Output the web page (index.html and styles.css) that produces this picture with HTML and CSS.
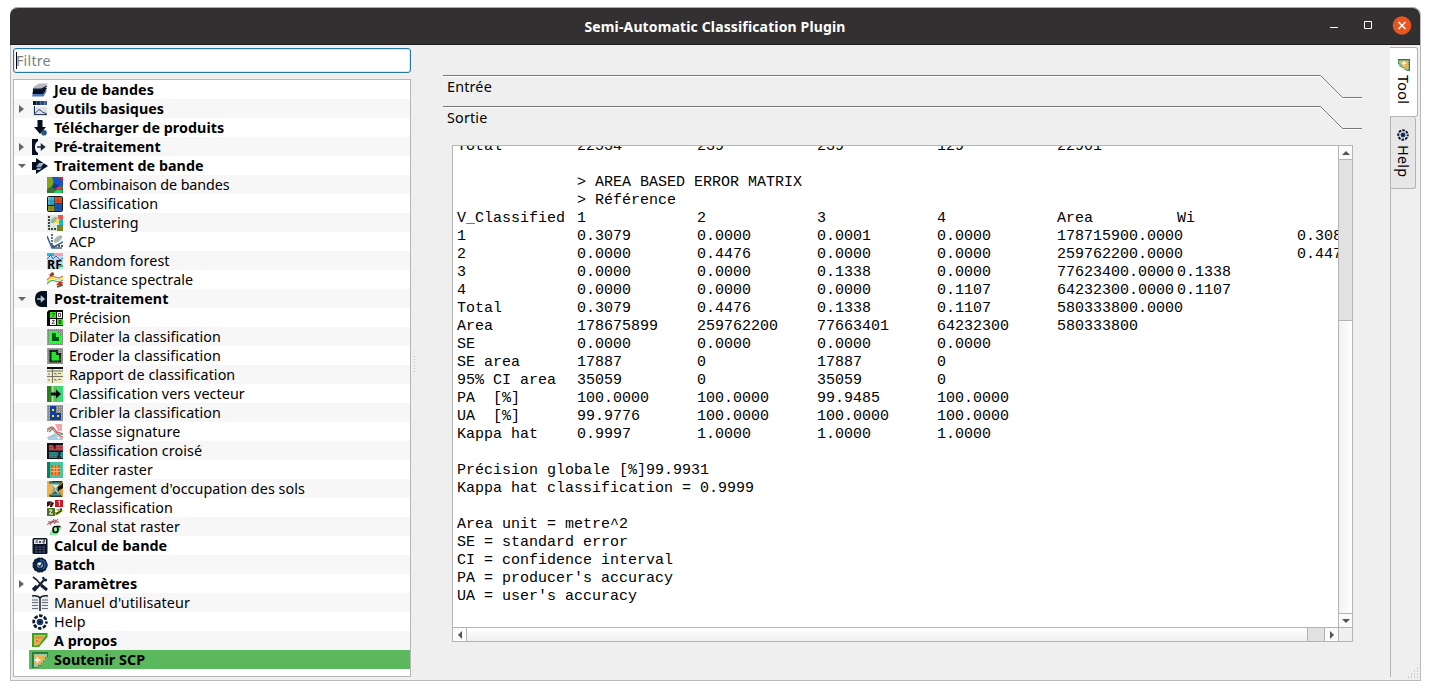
FILE: index.html
```
<!DOCTYPE html>
<html lang="fr">
<head>
<meta charset="utf-8">
<title>Semi-Automatic Classification Plugin</title>
<link rel="stylesheet" href="styles.css">
</head>
<body>
<svg class="defs" width="0" height="0">
  <defs>
    <pattern id="mesh" width="2" height="2" patternUnits="userSpaceOnUse"><rect width="2" height="2" fill="#8c8c8c"/><rect width="1" height="1" fill="#b4b4b4"/></pattern>
    <pattern id="dots" width="2" height="2" patternUnits="userSpaceOnUse"><rect width="1" height="1" fill="#fff" opacity=".45"/></pattern>
    <linearGradient id="blue" x2="1"><stop stop-color="#04101f"/><stop offset="1" stop-color="#3c62a4"/></linearGradient>
    <linearGradient id="sky" x2="1" y2="1"><stop stop-color="#6dd3e8"/><stop offset="1" stop-color="#1f8cba"/></linearGradient>
    <symbol id="lifebuoy" viewBox="0 0 16 16"><circle cx="8" cy="8" r="6.3" fill="none" stroke="#0c1830" stroke-width="2.700" stroke-dasharray="3.5 1.448" stroke-dashoffset="1.75"/><circle cx="8" cy="8" r="3.300" fill="#1c3d73"/><circle cx="8" cy="8" r="1.500" fill="#0c1830"/></symbol>
    <symbol id="plugin" viewBox="0 0 16 16"><path d="M0 0H16V5H14V8H12V11H10V14H7V16H0Z" fill="#2f7a35"/><path d="M2 2H15V5H13V8H11V11H9V13H6V15H2Z" fill="#e9b455"/><path d="M2 2.500H15M2.500 2V15" stroke="#7fd6d0" stroke-width="1.200" stroke-dasharray="2 1"/><path d="M15 5H13.500V8H11.500V11H9.500V13H6.500V15H2" fill="none" stroke="#4cc0cd" stroke-width="1.200" stroke-dasharray="2 1"/><path d="M5.500 5V11M2.500 8H8.500" stroke="#fff" stroke-width="1.400"/></symbol>
  </defs>
</svg>
<div class="window">
  <header class="titlebar">
    <h1 class="title">Semi-Automatic Classification Plugin</h1>
    <div class="controls">
      <svg width="88" height="20" viewBox="0 0 88 20"><path d="M4 11.5H12" stroke="#fff"/><path d="M38.5 5.5H45.5V12.5H38.5Z" fill="none" stroke="#fff"/><circle cx="76" cy="9.500" r="9.3" fill="#e95420"/><path d="M72.5 6L79.5 13M79.5 6L72.5 13" stroke="#fff" stroke-width="1.5"/></svg>
    </div>
  </header>
  <div class="body">
    <aside class="sidebar">
      <div class="filter"><i class="caret"></i><span>Filtre</span></div>
      <ul class="tree">
        <li class="top"><i class="arrow"></i><svg class="icon" viewBox="0 0 16 16"><path d="M1 11L5 8.5H15L11.5 14.5H0Z" fill="#5279bd"/><path d="M1 8L5 6H15L11 12H0.5Z" fill="#04101f"/><path d="M2 4.5L7 1.5H16L11.5 7H1Z" fill="#b6b9be"/><path d="M1 6.500H9L15 3.5V4.500L11 8.3H1Z" fill="#101d31"/></svg><span>Jeu de bandes</span></li>
        <li class="top"><i class="arrow closed"></i><svg class="icon" viewBox="0 0 16 16"><rect x="1" width="14" height="4" fill="url(#blue)"/><path d="M4.5 0V4M8.5 0V4M12.5 0V4" stroke="#8ba1c7" stroke-width=".5"/><rect x="1" y="6" width="14" height="9" fill="#dce1e9"/><path d="M2.5 5V13.5H15M3 12C5 12 6 7.500 8 9S11 12 14.500 12.500" fill="none" stroke="#263a5c"/></svg><span>Outils basiques</span></li>
        <li class="top"><i class="arrow"></i><svg class="icon" viewBox="0 0 16 16"><path d="M5.500 0H10.500V7H14L8 14L2 7H5.500Z" fill="#04101f"/><circle cx="12" cy="12.700" r="2.800" fill="#2b5480"/></svg><span>Télécharger de produits</span></li>
        <li class="top"><i class="arrow closed"></i><svg class="icon" viewBox="0 0 16 16"><path d="M0 0H6V2Q3 3.500 3 8T6 14V16H0Z" fill="#04101f"/><path d="M5 8H11M9.500 5.500L12.500 8L9.500 10.500Z" stroke="#1c2a40" stroke-width="1.500" fill="#1c2a40"/></svg><span>Pré-traitement</span></li>
        <li class="top"><i class="arrow open"></i><svg class="icon" viewBox="0 0 16 16"><path d="M0 4H4V0L16 8L4 16V12H0Z" fill="#04101f"/><path d="M4 9L7 5H12L9 9ZM4 12L6 9H10L8 12Z" fill="#9fb6cf"/><path d="M5 9.500H10" stroke="#274773" stroke-width="1.500"/></svg><span>Traitement de bande</span></li>
        <li class="child tight"><svg class="icon" viewBox="0 0 16 16"><rect width="16" height="16" fill="#35752e"/><path d="M0 0H8L5 9L0 12Z" fill="#85a515"/><path d="M5 0H13L16 3V9L10 10L7 6Z" fill="#1556cf"/><path d="M11 0H16V4Z" fill="#d82c22"/><path d="M7 6L12 8L9 13L5 10Z" fill="#183b8d"/><path d="M8 12L12 9.500L16 10L13 13Z" fill="#f13448"/><path d="M7 15L10 13L16 13.500L14 16H8Z" fill="#20d474"/></svg><span>Combinaison de bandes</span></li>
        <li class="child"><svg class="icon" viewBox="0 0 16 16"><rect width="16" height="16" rx="2" fill="#151515"/><path d="M1 1H7.500V9H1Z" fill="url(#sky)"/><path d="M8 1H15V7.500H8Z" fill="#e84b1c"/><path d="M1 10H7.500V15H1Z" fill="#8f9b25"/><path d="M8 8H15V15H8Z" fill="#1756be"/><path d="M4 1V15M11 1V15M1 5H15M1 12H15" stroke="#222" stroke-width=".2"/></svg><span>Classification</span></li>
        <li class="child"><svg class="icon" viewBox="0 0 16 16"><rect width="16" height="16" fill="#dce8df"/><path d="M2 1V14H11" stroke="#111" stroke-width="1.500" stroke-dasharray="2 1" fill="none"/><ellipse cx="7" cy="5" rx="4" ry="2.400" fill="#9db4aa" transform="rotate(-40 7 5)"/><path d="M11 0H16V6H11Z" fill="#ed5549"/><path d="M9 4H13V8H9Z" fill="#f4e225"/><path d="M12 5H16V10H12Z" fill="#10b7db"/><path d="M10 10H16V16H10Z" fill="#748722"/></svg><span>Clustering</span></li>
        <li class="child"><svg class="icon" viewBox="0 0 16 16"><path d="M5 0V12H16" stroke="#222" stroke-width="1.300" stroke-dasharray="2 1" fill="none"/><ellipse cx="11" cy="5" rx="5" ry="2.400" fill="#a4bbb4" transform="rotate(-38 11 5)"/><path d="M0 2L5 14L16 8M5 14H15" fill="none" stroke="#356096" stroke-width="1.500"/></svg><span>ACP</span></li>
        <li class="child"><svg class="icon" viewBox="0 0 16 16"><rect width="16" height="16" fill="#bbd8f4"/><path d="M0 0H7V3H0Z" fill="#25bad4"/><path d="M7 0H16V3H7Z" fill="#f2a2ae"/><path d="M0 6L4 2L6 6L9 3L13 7L16 5" stroke="#4a6caf" fill="none"/><text x="0" y="15.500" class="rf" textLength="15" lengthAdjust="spacingAndGlyphs">RF</text><path d="M12 12H16V14H12Z" fill="#45b94b"/></svg><span>Random forest</span></li>
        <li class="child"><svg class="icon" viewBox="0 0 16 16"><path d="M2 3L5 0L7 1L5 4Z" fill="#d92b25"/><path d="M3 4.500L7 2" stroke="#226b37" stroke-width="1.500"/><path d="M0 8Q4 3 8 5T16 4" fill="none" stroke="#de793e" stroke-width="1.300"/><path d="M0 10Q4 5 8 7T16 6" fill="none" stroke="#f0dd37" stroke-width="1.300"/><path d="M0 12Q4 7 8 9T16 8" fill="none" stroke="#48b665" stroke-width="1.300"/><path d="M9 13L12 10H16L14 14Z" fill="#d92b25"/><path d="M10 15L16 13" stroke="#226b37" stroke-width="1.500"/></svg><span>Distance spectrale</span></li>
        <li class="top"><i class="arrow open"></i><svg class="icon" viewBox="0 0 16 16"><path d="M15 0H9Q3 1 3 8T9 16H15Z" fill="#04101f"/><path d="M5 8H11M9.500 5.800L12 8L9.500 10.200Z" stroke="#b4c1da" stroke-width="1.500" fill="#b4c1da"/></svg><span>Post-traitement</span></li>
        <li class="child"><svg class="icon" viewBox="0 0 16 16"><path d="M0 2L2 0H16V16H0Z" fill="#080808"/><path d="M3 2H9V8H3ZM10 9H16V15H10Z" fill="#39e81f"/><path d="M10 2H15V8H10ZM3 9H9V15H3Z" fill="#f4f4f4"/><path d="M4.500 3.500H7.500L5.500 7M11.500 3.500H13.500V6.500H11.500ZM5 10.500H7.500L5 13.500H7.500M12 10.500H14V13.500H12ZM12 12H14" fill="none" stroke="#333" stroke-width=".8"/></svg><span>Précision</span></li>
        <li class="child"><svg class="icon" viewBox="0 0 16 16"><rect width="16" height="16" fill="url(#mesh)"/><path d="M2 2H11V4H13V7H15V14H2Z" fill="#20ff2f"/><path d="M5 4H9V8H12V12H5Z" fill="#07521b"/></svg><span>Dilater la classification</span></li>
        <li class="child"><svg class="icon" viewBox="0 0 16 16"><rect width="16" height="16" fill="url(#mesh)"/><path d="M3 3H10V6H13V13H4Z" fill="#20e82f"/><path d="M3.500 3H10V6H13V13.500H3.500Z" fill="none" stroke="#101810" stroke-width="2.200" stroke-dasharray="2 .3"/></svg><span>Eroder la classification</span></li>
        <li class="child"><svg class="icon" viewBox="0 0 16 16"><rect width="16" height="16" fill="#eceac0"/><path d="M0 0H16V2H0Z" fill="#111"/><path d="M0 4H16M0 9.500H16M5.500 2V16" stroke="#555" stroke-width=".8"/><path d="M2 6V8M2 12V14M7 6.500H9V8M11 6.500H14M7 12.500H9V14M11 12.500H14" fill="none" stroke="#777" stroke-width=".9"/></svg><span>Rapport de classification</span></li>
        <li class="child"><svg class="icon" viewBox="0 0 16 16"><rect width="16" height="16" fill="#5bbc55"/><path d="M0 0H5V16H0Z" fill="#287b1e"/><path d="M5.500 0V16" stroke="#a4e39e" stroke-width="2"/><path d="M10 0H16V16H10Z" fill="#39d875"/><path d="M4 6.500H9V3.500L14 8L9 12.500V9.500H4Z" fill="#050505"/><path d="M0 0H16V16H0Z" fill="url(#dots)" opacity=".2"/></svg><span>Classification vers vecteur</span></li>
        <li class="child"><svg class="icon" viewBox="0 0 16 16"><rect width="16" height="16" fill="url(#mesh)"/><path d="M3 1H9V8H14V15H3Z" fill="#103f9d"/><path d="M5 4H7V6H5ZM5 10H7V12H5ZM10 10H12V12H10Z" fill="#f7e714"/></svg><span>Cribler la classification</span></li>
        <li class="child"><svg class="icon" viewBox="0 0 16 16"><path d="M8 0H15V7H11Z" fill="#f1a6aa"/><path d="M0 6Q5 0 8 6T16 13M2 8L6 4L10 8L16 10" fill="none" stroke="#d66975" stroke-width="1.500"/><path d="M0 8Q4 1 7 7T16 10" fill="none" stroke="#4aa877"/><path d="M1 13L8 9L11 15L16 13V16H1Z" fill="#9ed3e3"/><path d="M0 14L8 11L16 15" stroke="#d9a7b9" fill="none"/></svg><span>Classe signature</span></li>
        <li class="child"><svg class="icon" viewBox="0 0 16 16"><rect width="16" height="16" fill="#111"/><path d="M2 2H16V7.500H2Z" fill="#c2494d"/><path d="M2 9H16V15H2Z" fill="#249391"/><path d="M2 4.500H15M2 11H15M2 13.500H15M4 2V15M7 2V15M10 2V15M13 2V15" stroke="#493238" stroke-width=".3"/><path d="M6 3L8 2V6M11 10H13L11 14H14" fill="none" stroke="#050505" stroke-width="1.200"/></svg><span>Classification croisé</span></li>
        <li class="child"><svg class="icon" viewBox="0 0 16 16"><rect width="16" height="16" fill="#48c59f"/><path d="M0 0H3V16H0Z" fill="#167b59"/><path d="M4 3H13V13H4Z" fill="#e45f11"/><path d="M7 3V13M10 3V13M4 6.500H13M4 9.500H13" stroke="#f6c88e" stroke-width=".8"/></svg><span>Editer raster</span></li>
        <li class="child"><svg class="icon" viewBox="0 0 16 16"><rect width="16" height="16" fill="#111"/><path d="M0 0H5L7 8L3 16H0Z" fill="#f0b24b"/><path d="M15 0H16V16H15L10 8Z" fill="#e1a03a"/><path d="M11 6L16 2V7L11 10Z" fill="#111"/><path d="M3 1H14L9.500 8L14 15H3L7.500 8Z" fill="#91c6bd"/><path d="M2 1.500H15M2 14.500H14" stroke="#33685b" stroke-width="2"/><path d="M5 4H12L8.500 7Z" fill="#d6ebd8"/><path d="M5 13L8 10L11 13Z" fill="#335d59"/></svg><span>Changement d'occupation des sols</span></li>
        <li class="child"><svg class="icon" viewBox="0 0 16 16"><path d="M8 0H16V7H8Z" fill="#cf1728"/><path d="M0 8H8V16H0Z" fill="#507122"/><path d="M11 2L12.500 1V6M2 10H5L2.500 14H6" fill="none" stroke="#fff"/><path d="M0 7V2Q3 0 7 3L5 7H3V5Z" fill="#181818"/><path d="M2 4L5 1L4 6Z" fill="#ca2029"/><path d="M9 9L14 9V7L16 11L11 15H8V12H11Z" fill="#a5c330"/><path d="M9 14L14 11V8" fill="none" stroke="#222" stroke-width="1.200"/></svg><span>Reclassification</span></li>
        <li class="child"><svg class="icon" viewBox="0 0 16 16"><path d="M0 5.500L9 1M1 3L12 3M3 6L7 0M7 5L11 0" stroke="#9c474d"/><path d="M4 12L11 8H15L10 16H2Z" fill="#8bea9b"/><path d="M13.500 7.500H9Q6 7.500 6 10.500T8.500 13.500Q11 13.500 11 10.500T9 7.500" fill="none" stroke="#07120b" stroke-width="1.700"/></svg><span>Zonal stat raster</span></li>
        <li class="top"><i class="arrow"></i><svg class="icon" viewBox="0 0 16 16"><rect x=".5" width="15" height="16" rx="1.500" fill="#0b1420"/><rect x="2" y="1.500" width="12" height="4.500" fill="#dfe3e8"/><path d="M3.500 4H4.500M5 2V5M7 3L9 5M9 3L7 5M11 2H12.500V3.500H11V5H13" stroke="#273140" stroke-width=".8" fill="none"/><path d="M3 9H13M3 11.500H13M3 14H13" stroke="#3b4a78" stroke-width="1.500" stroke-dasharray="2.600 1.100"/></svg><span>Calcul de bande</span></li>
        <li class="top"><i class="arrow"></i><svg class="icon" viewBox="0 0 16 16"><circle cx="8" cy="8" r="5" fill="none" stroke="#0b2344" stroke-width="4.500"/><path d="M8 3A5 5 0 0 1 11 12" fill="none" stroke="#2d60a2" stroke-width="1.500"/><circle cx="8" cy="8" r="6.900" fill="none" stroke="#111f36" stroke-width="1.400" stroke-dasharray="2.500 1.200"/><path d="M6 8L8 10L11.500 4.500" fill="none" stroke="#163767" stroke-width="1.500"/></svg><span>Batch</span></li>
        <li class="top"><i class="arrow closed"></i><svg class="icon" viewBox="0 0 16 16"><path d="M2 15L12 4M12 4L11 1M12 4L15 4" stroke="#142236" stroke-width="2.300"/><path d="M1 1L5 4L9 9" stroke="#141f2e" stroke-width="1.600" fill="none"/><path d="M9 9L15 14" stroke="#141f2e" stroke-width="3"/><path d="M1 14L5 10" stroke="#142236" stroke-width="3.500"/></svg><span>Paramètres</span></li>
        <li class="top plain"><i class="arrow"></i><svg class="icon" viewBox="0 0 16 16"><rect width="16" height="14" y="1" fill="#e9ebed"/><path d="M0 1Q6 0 8 3Q10 0 16 1M8 3V16" fill="none" stroke="#111f2e" stroke-width="1.500"/><path d="M0 5H6M0 7.500H6M0 10.500H6M0 13.500H6M10 5H16M10 7.500H16M10 10.500H16M10 13.500H16" stroke="#68717a" stroke-width="1.100"/></svg><span>Manuel d'utilisateur</span></li>
        <li class="top plain"><i class="arrow"></i><svg class="icon"><use href="#lifebuoy"/></svg><span>Help</span></li>
        <li class="top"><i class="arrow"></i><svg class="icon" viewBox="0 0 16 16"><path d="M0 0H15.500V4L7 14H0Z" fill="#38a51e"/><path d="M2 2H14L7 12L2 13Z" fill="#eaac52"/><path d="M3 5L5 4L7 5L9 4L11 5M4 9L5 7L7 9" fill="none" stroke="#ac8757"/></svg><span>A propos</span></li>
        <li class="top selected"><i class="arrow"></i><svg class="icon"><use href="#plugin"/></svg><span>Soutenir SCP</span></li>
      </ul>
    </aside>
    <main class="main">
      <section class="fold"><svg class="fold-line" width="920" height="25"><path d="M0 1.500H877L899 23.500H919" fill="none" stroke="#fff"/><path d="M0 .5H877.500L899.500 22.500H919" fill="none" stroke="#777"/></svg><h2 class="fold-title">Entrée</h2></section>
      <section class="fold"><svg class="fold-line" width="920" height="25"><path d="M0 1.500H877L899 23.500H919" fill="none" stroke="#fff"/><path d="M0 .5H877.500L899.500 22.500H919" fill="none" stroke="#777"/></svg><h2 class="fold-title">Sortie</h2></section>
      <div class="output">
        <div class="viewport">
<pre class="report">Total&#9;22534&#9;239&#9;239&#9;129&#9;22901

&#9;&gt; AREA BASED ERROR MATRIX
&#9;&gt; Référence
V_Classified&#9;1&#9;2&#9;3&#9;4&#9;Area&#9;Wi
1&#9;0.3079&#9;0.0000&#9;0.0001&#9;0.0000&#9;178715900.0000&#9;0.3080
2&#9;0.0000&#9;0.4476&#9;0.0000&#9;0.0000&#9;259762200.0000&#9;0.4476
3&#9;0.0000&#9;0.0000&#9;0.1338&#9;0.0000&#9;77623400.000<span class="nudge">0</span>0.1338
4&#9;0.0000&#9;0.0000&#9;0.0000&#9;0.1107&#9;64232300.000<span class="nudge">0</span>0.1107
Total&#9;0.3079&#9;0.4476&#9;0.1338&#9;0.1107&#9;580333800.0000
Area&#9;178675899&#9;259762200&#9;77663401&#9;64232300&#9;580333800
SE&#9;0.0000&#9;0.0000&#9;0.0000&#9;0.0000
SE area&#9;17887&#9;0&#9;17887&#9;0
95% CI area&#9;35059&#9;0&#9;35059&#9;0
PA  [%]&#9;100.0000&#9;100.0000&#9;99.9485&#9;100.0000
UA  [%]&#9;99.9776&#9;100.0000&#9;100.0000&#9;100.0000
Kappa hat&#9;0.9997&#9;1.0000&#9;1.0000&#9;1.0000

Précision globale [%]99.9931
Kappa hat classification = 0.9999

Area unit = metre^2
SE = standard error
CI = confidence interval
PA = producer's accuracy
UA = user's accuracy</pre>
        </div>
        <div class="vbar"><div class="btn"><i class="up"></i></div><div class="groove"></div><div class="handle"></div><div class="btn"><i class="down"></i></div></div>
        <div class="hbar"><div class="btn"><i class="left"></i></div><div class="handle"></div><div class="groove"></div><div class="btn"><i class="right"></i></div></div>
        <div class="corner"></div>
      </div>
    </main>
    <nav class="tabs">
      <div class="tab active"><svg class="tab-icon turned"><use href="#plugin"/></svg><span>Tool</span></div>
      <div class="tab"><svg class="tab-icon"><use href="#lifebuoy"/></svg><span>Help</span></div>
      <div class="tab-rest"></div>
    </nav>
    <svg class="grip" width="12" height="12"><path d="M10 1h1M7 4h1M10 4h1M4 7h1M7 7h1M10 7h1M1 10h1M4 10h1M7 10h1M10 10h1" stroke="#aaa"/></svg>
    <svg class="splitter" width="3" height="20"><path d="M1.500 2V18" stroke="#bbb" stroke-dasharray="1 2"/></svg>
  </div>
</div>
</body>
</html>
```
FILE: styles.css
```
* { box-sizing: border-box; }
body { margin: 0; padding: 7px 9px 0 10px; height: 690px; overflow: hidden; background: #fff; color: #000; font: 14.3px/19px "Noto Sans", sans-serif; }
.defs { position: absolute; }
.window { width: 1411px; height: 674px; display: flex; flex-direction: column; border-radius: 8px 8px 0 0; background: #efefef; border: 1px solid #bababa; border-top: 0; border-left-width: 0; box-shadow: inset 1px 0 #bababa; position: relative; }
.titlebar { height: 38px; display: grid; grid-template-columns: 1fr auto 1fr; align-items: center; background: #333031; border-top: 1px solid #aaa; border-bottom: 1px solid #1e1e1e; border-radius: 8px 8px 0 0; }
.title { grid-column: 2; margin: 0; color: #fff; font-size: 14px; line-height: 19px; font-weight: 700; letter-spacing: .14px; }
.controls { justify-self: end; display: flex; margin-right: 6px; }
.body { position: relative; flex: 1; display: flex; min-height: 0; }
.sidebar { width: 401px; padding: 3px 0 3px 3px; display: flex; flex-direction: column; gap: 6px; }
.filter { height: 25px; display: flex; align-items: center; border: 1px solid #2778a5; border-radius: 3px; background: #fff; color: #7f7f7f; padding-left: 2px; box-shadow: inset 0 0 0 1px #d8e9f2; letter-spacing: .2px; }
.filter span { margin-left: -1px; }
.caret { width: 1px; height: 17px; background: #000; }
.tree { flex: 1; margin: 0; padding: 0; list-style: none; border: 1px solid #b6b6b6; background: #fff; }
.tree li { height: 19px; display: flex; align-items: center; white-space: nowrap; letter-spacing: .08px; }
.tree li:nth-child(even) { background: #f7f7f7; }
.tree li span { margin-left: 6px; }
.tree .top { font-weight: 700; letter-spacing: .05px; }
.tree .plain { font-weight: 400; letter-spacing: .12px; }
.tree .tight { letter-spacing: -.07px; }
.child { padding-left: 33px; }
.icon { width: 16px; height: 16px; flex: none; display: block; }
.rf { font: 700 12px "Noto Sans", sans-serif; letter-spacing: 0; }
.arrow { width: 18px; height: 19px; flex: none; display: flex; align-items: center; }
.closed::before { content: ""; margin-left: 5px; border: 4px solid transparent; border-left: 5px solid #666; border-right: 0; }
.open::before { content: ""; margin-left: 4px; border: 4px solid transparent; border-top: 4px solid #666; border-bottom: 0; }
.selected { background: linear-gradient(90deg, transparent 15px, #5cb85c 15px); }
.main { width: 979px; padding: 30px 0 0 32px; display: flex; flex-direction: column; }
.fold { height: 31px; position: relative; }
.fold-line { position: absolute; left: 0; top: 0; }
.fold-title { margin: 0; padding: 2px 0 0 4px; font-weight: 400; font-size: 14.3px; line-height: 19px; letter-spacing: .2px; }
.output { width: 901px; height: 497px; margin: 8px 0 0 9px; display: grid; grid-template: 1fr 14px / 1fr 14px; grid-template: 1fr 15px / 1fr 15px; grid-template-columns: minmax(0, 1fr) 15px; border: 1px solid #b4b4b4; background: #fff; }
.output { grid-template: minmax(0, 1fr) 14px / minmax(0, 1fr) 14px; }
.viewport { overflow: hidden; }
.report { margin: -8px 0 0 4px; font: 15px/18px "Liberation Mono", monospace; tab-size: 120px; }
.nudge { letter-spacing: 3px; }
.vbar { display: flex; flex-direction: column; border-left: 1px solid #b4b4b4; }
.hbar { display: flex; border-top: 1px solid #b4b4b4; }
.btn { flex: none; width: 13px; height: 13px; display: flex; align-items: center; justify-content: center; background: #fbfbfb; }
.vbar .groove { height: 161px; background: #e1e1e1; border-top: 1px solid #b4b4b4; }
.vbar .handle { flex: 1; border: solid #b4b4b4; border-width: 1px 0; background: linear-gradient(90deg, #f1f1f1, #fff); }
.hbar .handle { flex: 1; border: solid #b4b4b4; border-width: 0 1px; background: linear-gradient(#fff, #efefef); }
.hbar .groove { width: 16px; background: #e1e1e1; }
.hbar .btn:last-child { width: 14px; border-left: 1px solid #b4b4b4; }
.btn i { border: 4px solid transparent; }
.btn .up { border-bottom-color: #555; border-top: 0; }
.btn .down { border-top-color: #555; border-bottom: 0; }
.btn .left { border-right-color: #555; border-left: 0; }
.btn .right { border-left-color: #555; border-right: 0; }
.corner { border: solid #b4b4b4; border-width: 1px 0 0 1px; background: #efefef; }
.tabs { width: 28px; padding: 2px 0 3px; display: flex; flex-direction: column; align-items: flex-start; }
.tab { width: 26px; height: 72px; padding-top: 12px; display: flex; flex-direction: column; align-items: center; gap: 4px; border: 1px solid #b4b4b4; border-top: 0; border-radius: 0 3px 3px 0; background: #e7e7e7; letter-spacing: .3px; }
.tab.active { width: 28px; height: 70px; padding-top: 11px; background: #fff; border: 1px solid #b4b4b4; border-left: 0; }
.tab span { writing-mode: vertical-rl; line-height: 19px; }
.tab-icon { width: 12px; height: 12px; flex: none; }
.turned { transform: rotate(90deg); }
.tab-rest { flex: 1; width: 1px; background: #b4b4b4; }
.grip { position: absolute; right: 1px; bottom: 1px; }
.splitter { position: absolute; left: 403px; top: 309px; }
```
